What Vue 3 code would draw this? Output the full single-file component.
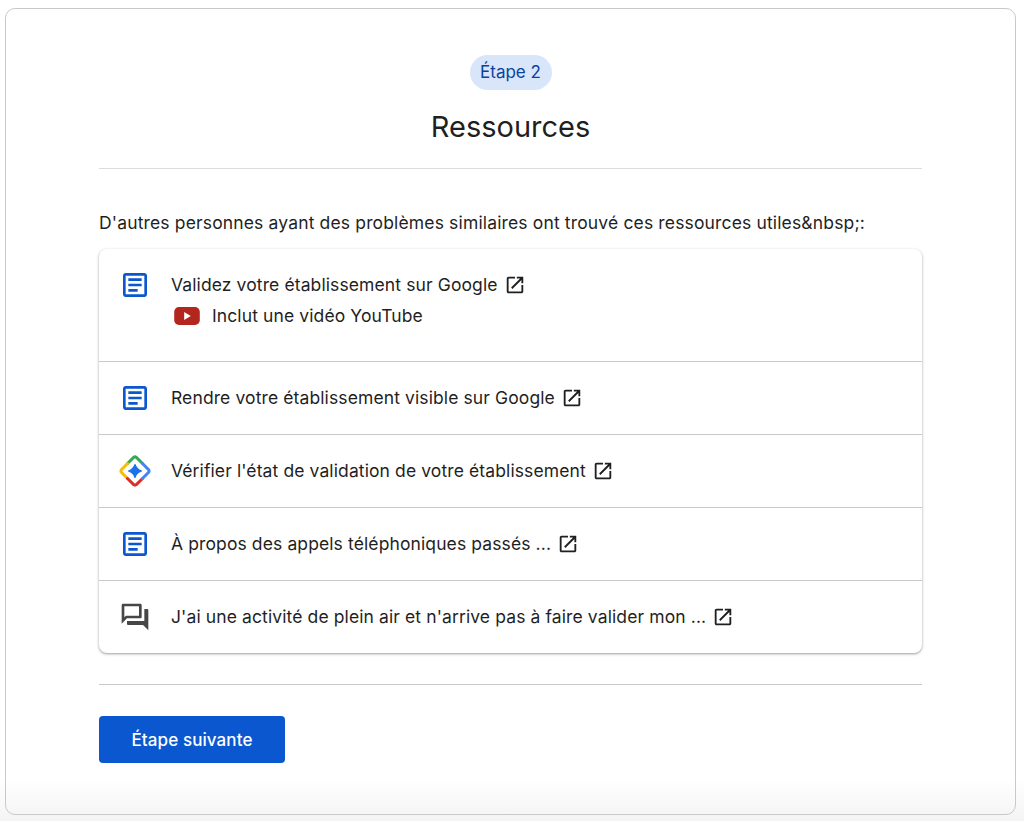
<script setup>
const rows = [
  { icon: 'doc', text: 'Validez votre établissement sur Google', video: 'Inclut une vidéo YouTube' },
  { icon: 'doc', text: 'Rendre votre établissement visible sur Google' },
  { icon: 'spark', text: "Vérifier l'état de validation de votre établissement" },
  { icon: 'doc', text: 'À propos des appels téléphoniques passés ...' },
  { icon: 'forum', text: "J'ai une activité de plein air et n'arrive pas à faire valider mon ..." },
]
</script>

<template>
  <div class="page">
    <main class="card">
      <header class="head">
        <span class="pill">Étape 2</span>
        <h1 class="title">Ressources</h1>
      </header>
      <p class="intro">D'autres personnes ayant des problèmes similaires ont trouvé ces ressources utiles&amp;nbsp;:</p>
      <ul class="list">
        <li v-for="(row, i) in rows" :key="i" class="row" :class="{ tall: row.video }">
          <span class="lead">
            <svg v-if="row.icon === 'doc'" viewBox="0 0 24 24" width="32" height="32">
              <path fill="#0b57d0" fill-rule="evenodd" d="M5 3h14c1.100 0 2 .9 2 2v14c0 1.100-.9 2-2 2H5c-1.100 0-2-.9-2-2V5c0-1.100.9-2 2-2zm0 2v14h14V5H5z" />
              <path fill="#0b57d0" d="M7 7h10v2H7zM7 11h10v2H7zM7 15h7v2H7z" />
            </svg>
            <svg v-else-if="row.icon === 'spark'" viewBox="0 0 32 32" width="32" height="32" fill="none" stroke-width="3" stroke-linecap="round">
              <path d="M8.500 8.500 14.600 2.400Q16 1.400 17.400 2.400L23.500 8.500" stroke="#34a853" />
              <path d="M8.500 8.500 2.400 14.600Q1.400 16 2.400 17.400L8.500 23.500" stroke="#fbbc04" />
              <path d="M8.500 23.500 14.600 29.600Q16 30.600 17.400 29.600L23.500 23.500" stroke="#d93025" />
              <path d="M23.500 8.500 29.600 14.600Q30.600 16 29.600 17.400L23.500 23.500" stroke="#4285f4" />
              <path d="M16 9.500Q17.500 14.500 22.500 16Q17.500 17.500 16 22.500Q14.500 17.500 9.500 16Q14.500 14.500 16 9.500Z" fill="#1a73e8" stroke="#1a73e8" stroke-width="1.200" stroke-linejoin="round" />
            </svg>
            <svg v-else viewBox="0 0 24 24" width="32" height="32">
              <path fill="#444746" d="M15 4v7H5.170L4 12.170V4h11m1-2H3c-.55 0-1 .45-1 1v14l4-4h10c.55 0 1-.45 1-1V3c0-.55-.45-1-1-1zm5 4h-2v9H6v2c0 .55.45 1 1 1h11l4 4V7c0-.55-.45-1-1-1z" />
            </svg>
          </span>
          <div class="body">
            <div class="line">
              <span class="label">{{ row.text }}</span>
              <svg class="ext" viewBox="0 0 24 24" width="22" height="22">
                <path fill="#1f1f1f" d="M19 19H5V5h7V3H5c-1.110 0-2 .9-2 2v14c0 1.100.89 2 2 2h14c1.100 0 2-.9 2-2v-7h-2v7zM14 3v2h3.590l-9.830 9.830 1.410 1.410L19 6.410V10h2V3h-7z" />
              </svg>
            </div>
            <div v-if="row.video" class="video">
              <svg viewBox="0 0 27 19" width="26" height="18">
                <rect width="27" height="19" rx="5" fill="#b3261e" />
                <path d="M10.500 5.200 17.500 9.500 10.500 13.800Z" fill="#fff" />
              </svg>
              <span class="label">{{ row.video }}</span>
            </div>
          </div>
        </li>
      </ul>
      <div class="foot">
        <button class="next" type="button">Étape suivante</button>
      </div>
    </main>
  </div>
</template>

<style>
html, body { margin: 0; background: #fff; }
</style>

<style scoped>
.page {
  height: 821px;
  box-sizing: border-box;
  padding: 8px 8px 6px 5px;
  overflow: hidden;
  font-family: Inter, Roboto, "Liberation Sans", sans-serif;
  color: #1f1f1f;
  background: linear-gradient(to bottom, #fff 0, #fff 778px, #f4f4f4 821px);
}
.card {
  height: 807px;
  box-sizing: border-box;
  border: 1px solid #c9c9c9;
  border-radius: 10px;
  padding: 46px 93px 0;
}
.head {
  display: flex;
  flex-direction: column;
  align-items: center;
  height: 113px;
  border-bottom: 1px solid #dadce0;
}
.pill {
  width: 82px;
  height: 35px;
  border-radius: 18px;
  background: #d9e5f9;
  color: #0842a0;
  font-size: 17px;
  line-height: 34px;
  text-align: center;
}
.title {
  margin: 16px 0 0;
  font-size: 29px;
  line-height: 42px;
  font-weight: 400;
}
.intro {
  margin: 43px 0 0;
  font-size: 17.500px;
  line-height: 21px;
  letter-spacing: 0.15px;
  white-space: nowrap;
}
.list {
  list-style: none;
  margin: 16px 0 0;
  padding: 0;
  border-radius: 8px;
  box-shadow: 0 1px 3px rgba(60, 64, 67, 0.35), 0 1px 2px rgba(60, 64, 67, 0.2);
}
.row {
  display: flex;
  align-items: center;
  height: 73px;
  border-top: 1px solid #c9c9c9;
  box-sizing: border-box;
  font-size: 17.500px;
  letter-spacing: 0.11px;
}
.row:first-child { border-top: 0; }
.row.tall {
  height: 112px;
  align-items: flex-start;
  padding-top: 20px;
}
.lead {
  flex: none;
  width: 72px;
  display: flex;
  justify-content: center;
}
.body { min-width: 0; }
.line, .video {
  display: flex;
  align-items: center;
  height: 24px;
}
.label { padding-bottom: 2px; display: block; }
.tall .line { margin-top: 4px; }
.line { gap: 6px; }
.video {
  gap: 12px;
  margin-top: 7px;
  margin-left: 3px;
}
.next {
  display: block;
  width: 186px;
  height: 47px;
  margin-top: 31px;
  padding: 0;
  border: 0;
  border-radius: 4px;
  background: #0b57d0;
  color: #fff;
  font: 500 17px Inter, Roboto, "Liberation Sans", sans-serif;
  letter-spacing: 0.1px;
}
.foot {
  margin-top: 31px;
  border-top: 1px solid #c9c9c9;
}
</style>
